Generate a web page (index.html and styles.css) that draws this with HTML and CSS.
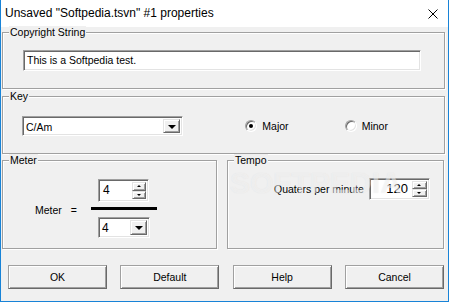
FILE: index.html
```html
<!DOCTYPE html>
<html lang="en">
<head>
    <meta charset="UTF-8">
    <title>Unsaved "Softpedia.tsvn" #1 properties</title>
    <link rel="stylesheet" href="styles.css">
</head>
<body>
    <div class="window">
        <!-- Title bar -->
        <div class="titlebar">
            <span class="title">Unsaved "Softpedia.tsvn" #1 properties</span>
            <svg class="close" width="10" height="10" viewBox="0 0 10 10">
                <path d="M0.5 0.5 L9.5 9.5 M9.5 0.5 L0.5 9.5" stroke="#000" stroke-width="1"/>
            </svg>
        </div>

        <div class="client">
            <!-- Copyright -->
            <div class="group copyright">
                <div class="group-title">Copyright String</div>
                <div class="field text-field">This is a Softpedia test.</div>
            </div>

            <!-- Key -->
            <div class="group key">
                <div class="group-title">Key</div>
                <div class="key-row">
                    <div class="field combo key-combo">
                        <span class="combo-value">C/Am</span>
                        <span class="combo-btn"><i class="arrow-down"></i></span>
                    </div>
                    <label class="radio"><span class="radio-dot checked"></span>Major</label>
                    <label class="radio"><span class="radio-dot"></span>Minor</label>
                </div>
            </div>

            <div class="row">
                <!-- Meter -->
                <div class="group meter">
                    <div class="group-title">Meter</div>
                    <div class="meter-body">
                        <div class="meter-label"><span>Meter</span><span>=</span></div>
                        <div class="fraction">
                            <div class="field spin meter-spin">
                                <span class="spin-value">4</span>
                                <span class="spin-buttons">
                                    <span class="spin-btn"><i class="tiny-up"></i></span>
                                    <span class="spin-btn"><i class="tiny-down"></i></span>
                                </span>
                            </div>
                            <div class="fraction-line"></div>
                            <div class="field combo meter-combo">
                                <span class="combo-value">4</span>
                                <span class="combo-btn"><i class="arrow-down"></i></span>
                            </div>
                        </div>
                    </div>
                </div>

                <!-- Tempo -->
                <div class="group tempo">
                    <div class="group-title">Tempo</div>
                    <div class="tempo-body">
                        <span>Quaters per minute</span>
                        <div class="field spin tempo-spin">
                            <span class="spin-value">120</span>
                            <span class="spin-buttons">
                                <span class="spin-btn"><i class="tiny-up"></i></span>
                                <span class="spin-btn"><i class="tiny-down"></i></span>
                            </span>
                        </div>
                    </div>
                </div>
            </div>

            <!-- Dialog buttons -->
            <div class="buttons">
                <button class="btn">OK</button>
                <button class="btn">Default</button>
                <button class="btn">Help</button>
                <button class="btn">Cancel</button>
            </div>
        </div>

        <div class="watermark">SOFTPEDIA</div>
    </div>
</body>
</html>
```

FILE: styles.css
```css
/* Reset */
* {
    margin: 0;
    padding: 0;
    box-sizing: border-box;
}

body {
    background: #fff;
    font-family: "Liberation Sans", Arial, sans-serif;
    font-size: 10.5px;
    color: #000;
}

/* Window frame */
.window {
    position: relative;
    width: 449px;
    height: 302px;
    border: 1px solid #1883d7;
    border-top: none;
    background: #f0f0f0;
    overflow: hidden;
}

.titlebar {
    height: 27px;
    background: #fff;
    display: flex;
    align-items: center;
    justify-content: space-between;
    padding: 0 10px 1px 4px;
}

.title {
    font-family: "Liberation Sans", Arial, sans-serif;
    font-size: 12px;
}

.close {
    display: block;
    margin-top: 1px;
}

/* Client area */
.client {
    padding: 5px 3px 0 1px;
}

/* Group boxes */
.group {
    border: 1px solid #a0a0a0;
    box-shadow: inset 1px 1px 0 #fff, 1px 1px 0 #fff;
}

.group-title {
    display: table;
    margin: -7px 0 0 6px;
    padding: 0 1px;
    line-height: 13px;
    background: #f0f0f0;
}

.copyright {
    height: 57px;
}

.key {
    height: 58px;
    margin-top: 7px;
}

.row {
    display: flex;
    gap: 10px;
    margin-top: 6px;
}

.meter {
    width: 215px;
    height: 89px;
}

.tempo {
    width: 217px;
    height: 89px;
}

/* Sunken fields */
.field {
    background: #fff;
    border: 1px solid;
    border-color: #a0a0a0 #fff #fff #a0a0a0;
    box-shadow: inset 1px 1px 0 #696969, inset -1px -1px 0 #e3e3e3;
}

.text-field {
    width: 398px;
    height: 21px;
    margin: 11px 0 0 20px;
    padding: 0 3px;
    line-height: 19px;
}

/* Combo boxes */
.combo {
    display: flex;
    padding: 2px;
}

.combo-value {
    flex: 1;
    line-height: 16px;
    padding-left: 1px;
}

.combo-btn,
.spin-btn {
    display: flex;
    align-items: center;
    justify-content: center;
    background: #f0f0f0;
    border: 1px solid;
    border-color: #e3e3e3 #696969 #696969 #e3e3e3;
    box-shadow: inset 1px 1px 0 #fff, inset -1px -1px 0 #a0a0a0;
}

.combo-btn {
    width: 17px;
}

.arrow-down {
    width: 0;
    height: 0;
    border-left: 4px solid transparent;
    border-right: 4px solid transparent;
    border-top: 4px solid #000;
    margin-top: 1px;
}

.key-row {
    display: flex;
    align-items: center;
    margin-top: 13px;
}

.key-combo {
    width: 164px;
    height: 20px;
    margin-left: 19px;
    margin-right: 62px;
}

/* Radio buttons */
.radio {
    width: 101px;
    display: flex;
    align-items: center;
    gap: 5px;
}

.radio-dot {
    position: relative;
    width: 12px;
    height: 12px;
    border-radius: 50%;
    background: #fff;
    border: 1px solid;
    border-color: #a0a0a0 #fff #fff #a0a0a0;
    box-shadow: inset 1px 1px 0 #696969, inset -1px -1px 0 #e3e3e3;
}

.radio-dot.checked::after {
    content: "";
    position: absolute;
    left: 3px;
    top: 3px;
    width: 4px;
    height: 4px;
    border-radius: 50%;
    background: #000;
}

/* Meter */
.meter-body {
    display: flex;
    align-items: center;
    margin-top: 12px;
    padding-left: 32px;
}

.meter-label {
    display: flex;
    gap: 9px;
    width: 56px;
    margin-top: 2px;
}

.fraction {
    width: 66px;
    padding-left: 7px;
}

.fraction-line {
    width: 66px;
    height: 3px;
    margin: 5px 0 7px -7px;
    background: #000;
}

.spin {
    display: flex;
    padding: 2px;
}

.spin-value {
    flex: 1;
    padding-left: 2px;
    line-height: 17px;
}

.spin-buttons {
    display: flex;
    flex-direction: column;
    width: 14px;
}

.spin-btn {
    flex: 1;
}

.tiny-up,
.tiny-down {
    width: 0;
    height: 0;
    border-left: 2px solid transparent;
    border-right: 2px solid transparent;
}

.tiny-up {
    border-bottom: 2px solid #000;
}

.tiny-down {
    border-top: 2px solid #000;
}

.meter-spin {
    width: 51px;
    height: 23px;
    font-size: 12px;
}

.meter-combo {
    width: 52px;
    height: 21px;
    font-size: 12px;
}

/* Tempo */
.tempo-body {
    display: flex;
    align-items: center;
    gap: 5px;
    margin-top: 11px;
    padding-left: 46px;
}

.tempo-spin {
    width: 61px;
    height: 22px;
    font-size: 13px;
}

.tempo-spin .spin-value {
    text-align: right;
    padding-right: 4px;
    line-height: 16px;
}

.tempo-spin .spin-buttons {
    width: 15px;
}

/* Dialog buttons */
.buttons {
    display: flex;
    justify-content: space-between;
    width: 436px;
    margin: 16px 0 0 6px;
}

.btn {
    width: 99px;
    height: 24px;
    font-family: "Liberation Sans", Arial, sans-serif;
    font-size: 10.5px;
    background: #f0f0f0;
    border: 1px solid;
    border-color: #a0a0a0 #696969 #696969 #a0a0a0;
    box-shadow: inset 1px 1px 0 #fff, inset -1px -1px 0 #a0a0a0;
}

/* Faint watermark over the dialog */
.watermark {
    position: absolute;
    left: 229px;
    top: 166px;
    font-family: "Liberation Sans", Arial, sans-serif;
    font-weight: bold;
    font-size: 30px;
    color: rgba(255, 255, 255, 0.45);
    text-shadow: 0 0 1px rgba(180, 180, 180, 0.25);
    pointer-events: none;
}
```
